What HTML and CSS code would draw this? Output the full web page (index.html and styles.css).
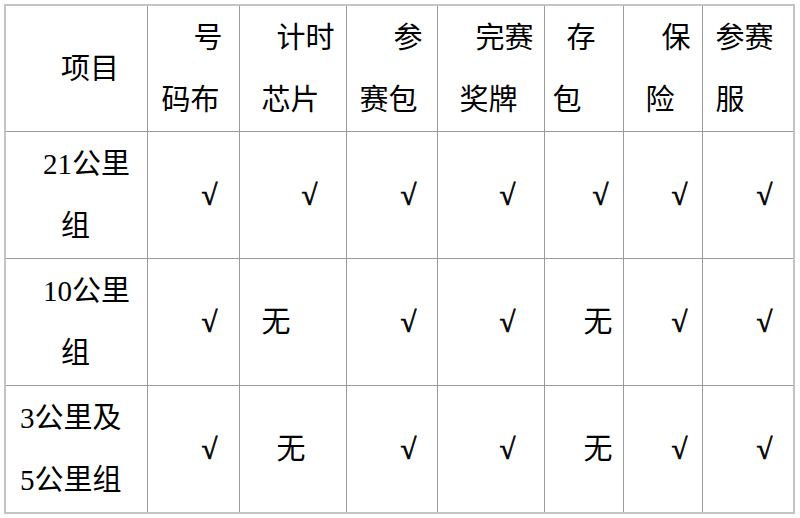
FILE: index.html
```html
<!DOCTYPE html>
<html lang="zh-CN">
<head>
<meta charset="utf-8">
<title>项目</title>
<link rel="stylesheet" href="styles.css">
</head>
<body>
<table class="grid">
  <colgroup>
    <col class="w0"><col class="w1"><col class="w2"><col class="w3"><col class="w4"><col class="w5"><col class="w6"><col class="w7">
  </colgroup>
  <tr class="head">
    <td><div class="ln p55">项目</div></td>
    <td><div class="ln p46">号</div><div class="ln p14">码布</div></td>
    <td><div class="ln p37">计时</div><div class="ln p22">芯片</div></td>
    <td><div class="ln p47">参</div><div class="ln p13">赛包</div></td>
    <td><div class="ln p38">完赛</div><div class="ln p22">奖牌</div></td>
    <td><div class="ln p22">存</div><div class="ln p8">包</div></td>
    <td><div class="ln p38">保</div><div class="ln p22">险</div></td>
    <td><div class="ln p13">参赛</div><div class="ln p13">服</div></td>
  </tr>
  <tr>
    <td><div class="ln p37">21公里</div><div class="ln p55">组</div></td>
    <td><div class="ln ck p54">√</div></td>
    <td><div class="ln ck p62">√</div></td>
    <td><div class="ln ck p54">√</div></td>
    <td><div class="ln ck p62">√</div></td>
    <td><div class="ln ck p48">√</div></td>
    <td><div class="ln ck p48">√</div></td>
    <td><div class="ln ck p54">√</div></td>
  </tr>
  <tr>
    <td><div class="ln p37">10公里</div><div class="ln p55">组</div></td>
    <td><div class="ln ck p54">√</div></td>
    <td><div class="ln p22">无</div></td>
    <td><div class="ln ck p54">√</div></td>
    <td><div class="ln ck p62">√</div></td>
    <td><div class="ln p39">无</div></td>
    <td><div class="ln ck p48">√</div></td>
    <td><div class="ln ck p54">√</div></td>
  </tr>
  <tr>
    <td><div class="ln p14">3公里及</div><div class="ln p14">5公里组</div></td>
    <td><div class="ln ck p54">√</div></td>
    <td><div class="ln p37">无</div></td>
    <td><div class="ln ck p54">√</div></td>
    <td><div class="ln ck p62">√</div></td>
    <td><div class="ln p39">无</div></td>
    <td><div class="ln ck p48">√</div></td>
    <td><div class="ln ck p54">√</div></td>
  </tr>
</table>
</body>
</html>
```
FILE: styles.css
```css
html, body {
  margin: 0;
  padding: 0;
  background: #ffffff;
}
body {
  padding: 4px 0 0 4px;
  font-family: "Liberation Serif", "Noto Sans CJK SC", serif;
  font-size: 29px;
  color: #000000;
}
.grid {
  border-collapse: collapse;
  table-layout: fixed;
  width: 791px;
  border: 2px solid #c4c4c4;
}
.grid td {
  border: 1px solid #9a9a9a;
  padding: 0;
  vertical-align: middle;
  height: 126px;
  white-space: nowrap;
}
.grid tr.head td {
  height: 125px;
}
.w0 { width: 142px; }
.w1 { width: 92px; }
.w2 { width: 107px; }
.w3 { width: 91px; }
.w4 { width: 107px; }
.w5 { width: 79px; }
.w6 { width: 79px; }
.w7 { width: 92px; }
.ln {
  line-height: 62px;
  text-align: left;
}
.ck {
  -webkit-text-stroke: 0.7px #000000;
}
.p8 { padding-left: 8px; }
.p13 { padding-left: 13px; }
.p14 { padding-left: 14px; }
.p22 { padding-left: 22px; }
.p37 { padding-left: 37px; }
.p38 { padding-left: 38px; }
.p39 { padding-left: 39px; }
.p46 { padding-left: 46px; }
.p47 { padding-left: 47px; }
.p48 { padding-left: 48px; }
.p54 { padding-left: 54px; }
.p55 { padding-left: 55px; }
.p62 { padding-left: 62px; }
```
